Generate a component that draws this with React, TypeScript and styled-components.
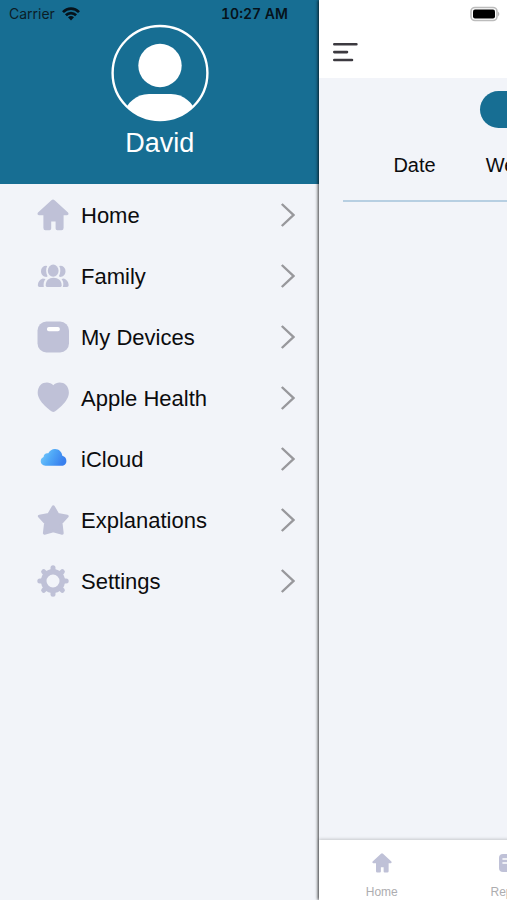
import React from "react";
import styled, { createGlobalStyle } from "styled-components";

const color = {
  brand: "#176e93",
  surface: "#f2f4f9",
  icon: "#bfc1d7",
  chevron: "#98989c",
  rule: "#b7cfe2",
  tab: "#adadb0",
};

const GlobalStyle = createGlobalStyle`
  *, *::before, *::after { box-sizing: border-box; }
  body {
    margin: 0;
    background: ${color.surface};
    color: #0c0c0e;
    font-family: "Liberation Sans", Arial, sans-serif;
  }
  button { font: inherit; color: inherit; border: 0; padding: 0; background: none; cursor: pointer; }
`;

const Screen = styled.div`
  position: relative;
  display: flex;
  min-height: 100vh;
  overflow: hidden;
`;

const StatusBar = styled.div`
  position: absolute;
  z-index: 2;
  top: 0;
  left: 0;
  right: 0;
  display: grid;
  grid-template-columns: 1fr auto 1fr;
  align-items: center;
  height: 27px;
  padding: 0 7px 0 9px;
  color: #000;
  font-family: Inter, sans-serif;
  font-size: 14px;
`;

const Carrier = styled.span`
  display: flex;
  align-items: center;
  gap: 7px;
  color: #0b1d27;
`;

const Clock = styled.time`
  font-weight: 600;
  font-variant-numeric: tabular-nums;
  color: #06121a;
`;

const BatterySlot = styled.span`
  display: flex;
  justify-content: flex-end;
`;

const Drawer = styled.aside`
  flex: 0 0 63%;
  background: ${color.surface};
`;

const Profile = styled.header`
  display: flex;
  flex-direction: column;
  align-items: center;
  gap: 5px;
  height: 184px;
  padding-top: 24px;
  background: ${color.brand};
  color: #fff;
`;

const ProfileName = styled.div`
  font-size: 27px;
  line-height: 32px;
`;

const MenuList = styled.ul`
  list-style: none;
  margin: 0;
  padding: 0;
`;

const MenuLink = styled.a`
  display: grid;
  grid-template-columns: 32px 1fr auto;
  align-items: center;
  gap: 12px;
  height: 61px;
  padding: 0 24px 0 37px;
  color: inherit;
  font-size: 22px;
  line-height: 28px;
  text-decoration: none;
`;

const MenuLabel = styled.span`
  padding-top: 2px;
`;

const Page = styled.main`
  position: relative;
  z-index: 1;
  flex: 0 0 100%;
  display: flex;
  flex-direction: column;
  background: ${color.surface};
  box-shadow: -1px 0 3px rgba(0, 0, 0, 0.75);
`;

const NavBar = styled.div`
  display: flex;
  align-items: flex-end;
  height: 78px;
  padding: 0 14px 14px;
  background: #fff;
`;

const IconButton = styled.button`
  display: flex;
  height: 24px;
`;

const Pill = styled.button`
  align-self: center;
  width: 185px;
  height: 37px;
  margin-top: 13px;
  border-radius: 19px;
  background: ${color.brand};
`;

const Records = styled.div`
  flex: 1;
  margin: 0 24px;
`;

const RecordTable = styled.table`
  width: 100%;
  border-collapse: collapse;
  border-bottom: 2px solid ${color.rule};
`;

const HeadCell = styled.th`
  width: 1px;
  height: 73px;
  padding: 2px 0 0 50px;
  font-size: 20px;
  font-weight: 400;
  text-align: left;

  &:last-child { width: auto; }
`;

const TabBar = styled.nav`
  display: grid;
  grid-template-columns: repeat(4, 1fr);
  height: 60px;
  background: #fff;
  box-shadow: 0 -1px 3px rgba(0, 0, 0, 0.18);
`;

const Tab = styled.a`
  display: flex;
  flex-direction: column;
  align-items: center;
  gap: 12px;
  padding: 13px 2px 0 0;
  color: ${color.tab};
  font-size: 12px;
  line-height: 14px;
  text-decoration: none;
`;

const HomeIcon = ({ size = 32 }: { size?: number }) => (
  <svg width={size} height={size} viewBox="0 0 32 32" fill={color.icon} aria-hidden="true">
    <path d="M14.4 1.2Q16 -.1 17.6 1.2L31 13.6Q32.4 15.8 30 16.2H26.6V29Q26.6 31.2 24.4 31.2H20.3Q18.6 31.2 18.6 29.4V22.6H14.2V29.4Q14.2 31.2 12.5 31.2H8.4Q6.4 31.2 6.4 29V16.2H2Q-.4 15.8 1 13.6Z" />
  </svg>
);

const FamilyIcon = () => (
  <svg width="32" height="32" viewBox="0 0 32 32" fill={color.icon} aria-hidden="true">
    <ellipse cx="16.2" cy="10.7" rx="5.4" ry="6.1" />
    <path d="M8.7 25.4C8.7 20.6 11.8 17.8 16.5 17.8S24.7 20.6 24.7 25.4Q24.6 26.9 23 26.9H10.4Q8.8 26.9 8.7 25.4Z" />
    <path d="M10.2 6A5 5 0 0 0 4 11.3C4 14.5 6.2 16.8 9.4 16.9L10.6 16.2C8.9 13.3 8.6 8.8 10.2 6ZM22.2 6A5 5 0 0 1 28.5 11.3C28.5 14.5 26.3 16.8 23.1 16.9L21.9 16.2C23.6 13.3 23.9 8.8 22.2 6Z" />
    <path d="M5.7 18.6C2.8 19.4 1 22 .8 25.2Q.9 26.9 2.4 26.9H6.8C6.3 23.6 6.8 21.1 8.5 18.9ZM26.9 18.6C29.7 19.4 31.5 22 31.7 25.2Q31.6 26.9 30 26.9H25.8C26.9 23.6 26.3 21.1 24.5 18.9Z" />
  </svg>
);

const ScaleIcon = () => (
  <svg width="32" height="32" viewBox="0 0 32 32" aria-hidden="true">
    <rect x=".5" y=".5" width="31.5" height="31" rx="9" fill={color.icon} />
    <rect x="10" y="6" width="12.8" height="4.2" rx="1.8" fill="#fff" />
  </svg>
);

const HeartIcon = () => (
  <svg width="32" height="32" viewBox="0 0 32 32" fill={color.icon} aria-hidden="true">
    <path d="M16.3 3.2C19.5-.2 25.5-.2 29 3C32.2 6.3 33 12.3 30 17C27.6 21.5 22.5 26.3 17.8 29.5Q16.3 30.4 14.8 29.5C10 26.3 5 21.5 2.5 17C-.4 12.3.4 6.3 3.5 3C7-.2 13-.2 16.3 3.2Z" />
  </svg>
);

const CloudIcon = () => (
  <svg width="32" height="32" viewBox="0 0 32 32" aria-hidden="true">
    <defs>
      <linearGradient id="cloud-fill" x1="0" y1="0" x2="1" y2=".35">
        <stop offset="0" stopColor="#7fd0fb" />
        <stop offset=".5" stopColor="#4fa8f7" />
        <stop offset="1" stopColor="#3a80ee" />
      </linearGradient>
    </defs>
    <path
      fill="url(#cloud-fill)"
      d="M8.4 22.7C5.5 22.5 3.7 20.7 3.7 18.2C3.7 16.3 4.9 14.7 6.6 14.1C6.6 11.4 9 9.6 11.3 10.3C12.6 7.6 15 6 18 6C21.9 6 25 8.9 25.3 12.8C27.8 13.4 29.4 15.4 29.4 17.9C29.4 20.6 27.4 22.7 24.6 22.7Z"
    />
  </svg>
);

const StarIcon = () => (
  <svg width="32" height="32" viewBox="0 0 32 32" fill={color.icon} stroke={color.icon} strokeWidth="3" strokeLinejoin="round" aria-hidden="true">
    <path d="M16.3 2.7L20.8 10.4L30.2 12.2L24 18.9L25.2 29.2L16.3 26.8L7.4 29.2L8.6 18.9L2.4 12.2L11.8 10.4Z" />
  </svg>
);

const GearIcon = () => (
  <svg width="32" height="32" viewBox="0 0 32 32" aria-hidden="true">
    <g stroke={color.icon} strokeWidth="5" strokeLinecap="round">
      {[0, 45, 90, 135, 180, 225, 270, 315].map((angle) => (
        <path key={angle} d="M16 6.5V2.8" transform={`rotate(${angle} 16 16)`} />
      ))}
    </g>
    <circle cx="16" cy="16" r="9.3" fill="none" stroke={color.icon} strokeWidth="5.6" />
  </svg>
);

const ReportIcon = () => (
  <svg width="20" height="20" viewBox="0 0 20 20" aria-hidden="true">
    <rect x="0" y="1" width="19" height="18" rx="4" fill={color.icon} />
    <path d="M4 6H13M4 10H8" stroke="#fff" strokeWidth="1.6" strokeLinecap="round" />
  </svg>
);

const ChartIcon = () => (
  <svg width="20" height="20" viewBox="0 0 20 20" aria-hidden="true">
    <path d="M4 18V10M10 18V3M16 18V7" stroke={color.icon} strokeWidth="4" />
  </svg>
);

const ChevronIcon = () => (
  <svg width="15" height="26" viewBox="0 0 15 26" fill="none" stroke={color.chevron} strokeWidth="2.4" aria-hidden="true">
    <path d="M1.8 2L13.4 13L1.8 24" />
  </svg>
);

const Avatar = () => (
  <svg width="98" height="98" viewBox="0 0 98 98" role="img" aria-label="Profile picture">
    <clipPath id="avatar-clip">
      <circle cx="49" cy="49" r="47" />
    </clipPath>
    <ellipse cx="49" cy="49" rx="47.4" ry="47" fill="none" stroke="#fff" strokeWidth="2.4" />
    <circle cx="49" cy="41.5" r="21.7" fill="#fff" />
    <path clipPath="url(#avatar-clip)" fill="#fff" d="M12 90C16 79 25 70 38 70H60C73 70 82 79 86 90V98H12Z" />
  </svg>
);

const WifiIcon = () => (
  <svg width="18" height="14" viewBox="0 0 18 14" fill="none" stroke="#06121a" strokeWidth="2.7" aria-hidden="true">
    <path d="M1 5.1C5.5.5 12.5.5 17 5.1M3.9 8.3C6.8 5.4 11.2 5.4 14.1 8.3" />
    <path d="M9 13.4L6 10.3Q9 7.9 12 10.3Z" fill="#06121a" stroke="none" />
  </svg>
);

const BatteryIcon = () => (
  <svg width="31" height="16" viewBox="0 0 31 16" aria-hidden="true">
    <rect x="2" y="1.5" width="26" height="13" rx="4" fill="#fff" stroke="#bcbcbc" strokeWidth="1.6" />
    <rect x="4" y="3.4" width="22" height="9.2" rx="2" fill="#000" />
    <path d="M29.2 5.6Q31.4 8 29.2 10.4Z" fill="#a9a9a9" />
  </svg>
);

const MenuIcon = () => (
  <svg width="26" height="24" viewBox="0 0 26 24" stroke="#3c3a40" strokeWidth="2.6" strokeLinecap="round" aria-hidden="true">
    <path d="M1.3 4.2H23.4M1.3 12.1H14M1.3 20H19" />
  </svg>
);

const menu = [
  { label: "Home", Icon: HomeIcon },
  { label: "Family", Icon: FamilyIcon },
  { label: "My Devices", Icon: ScaleIcon },
  { label: "Apple Health", Icon: HeartIcon },
  { label: "iCloud", Icon: CloudIcon },
  { label: "Explanations", Icon: StarIcon },
  { label: "Settings", Icon: GearIcon },
];

export default function App() {
  return (
    <>
      <GlobalStyle />
      <Screen>
        <StatusBar>
          <Carrier>
            Carrier
            <WifiIcon />
          </Carrier>
          <Clock>10:27 AM</Clock>
          <BatterySlot>
            <BatteryIcon />
          </BatterySlot>
        </StatusBar>

        <Drawer>
          <Profile>
            <Avatar />
            <ProfileName>David</ProfileName>
          </Profile>
          <nav aria-label="Main menu">
            <MenuList>
              {menu.map(({ label, Icon }) => (
                <li key={label}>
                  <MenuLink href="#">
                    <Icon />
                    <MenuLabel>{label}</MenuLabel>
                    <ChevronIcon />
                  </MenuLink>
                </li>
              ))}
            </MenuList>
          </nav>
        </Drawer>

        <Page>
          <NavBar>
            <IconButton type="button" aria-label="Toggle menu">
              <MenuIcon />
            </IconButton>
          </NavBar>
          <Pill type="button" aria-label="Choose period" />
          <Records>
            <RecordTable>
              <thead>
                <tr>
                  <HeadCell scope="col">Date</HeadCell>
                  <HeadCell scope="col">Weight</HeadCell>
                </tr>
              </thead>
            </RecordTable>
          </Records>
          <TabBar aria-label="Sections">
            <Tab href="#">
              <HomeIcon size={20} />
              Home
            </Tab>
            <Tab href="#">
              <ReportIcon />
              Report
            </Tab>
            <Tab href="#">
              <ChartIcon />
              Trend
            </Tab>
          </TabBar>
        </Page>
      </Screen>
    </>
  );
}
